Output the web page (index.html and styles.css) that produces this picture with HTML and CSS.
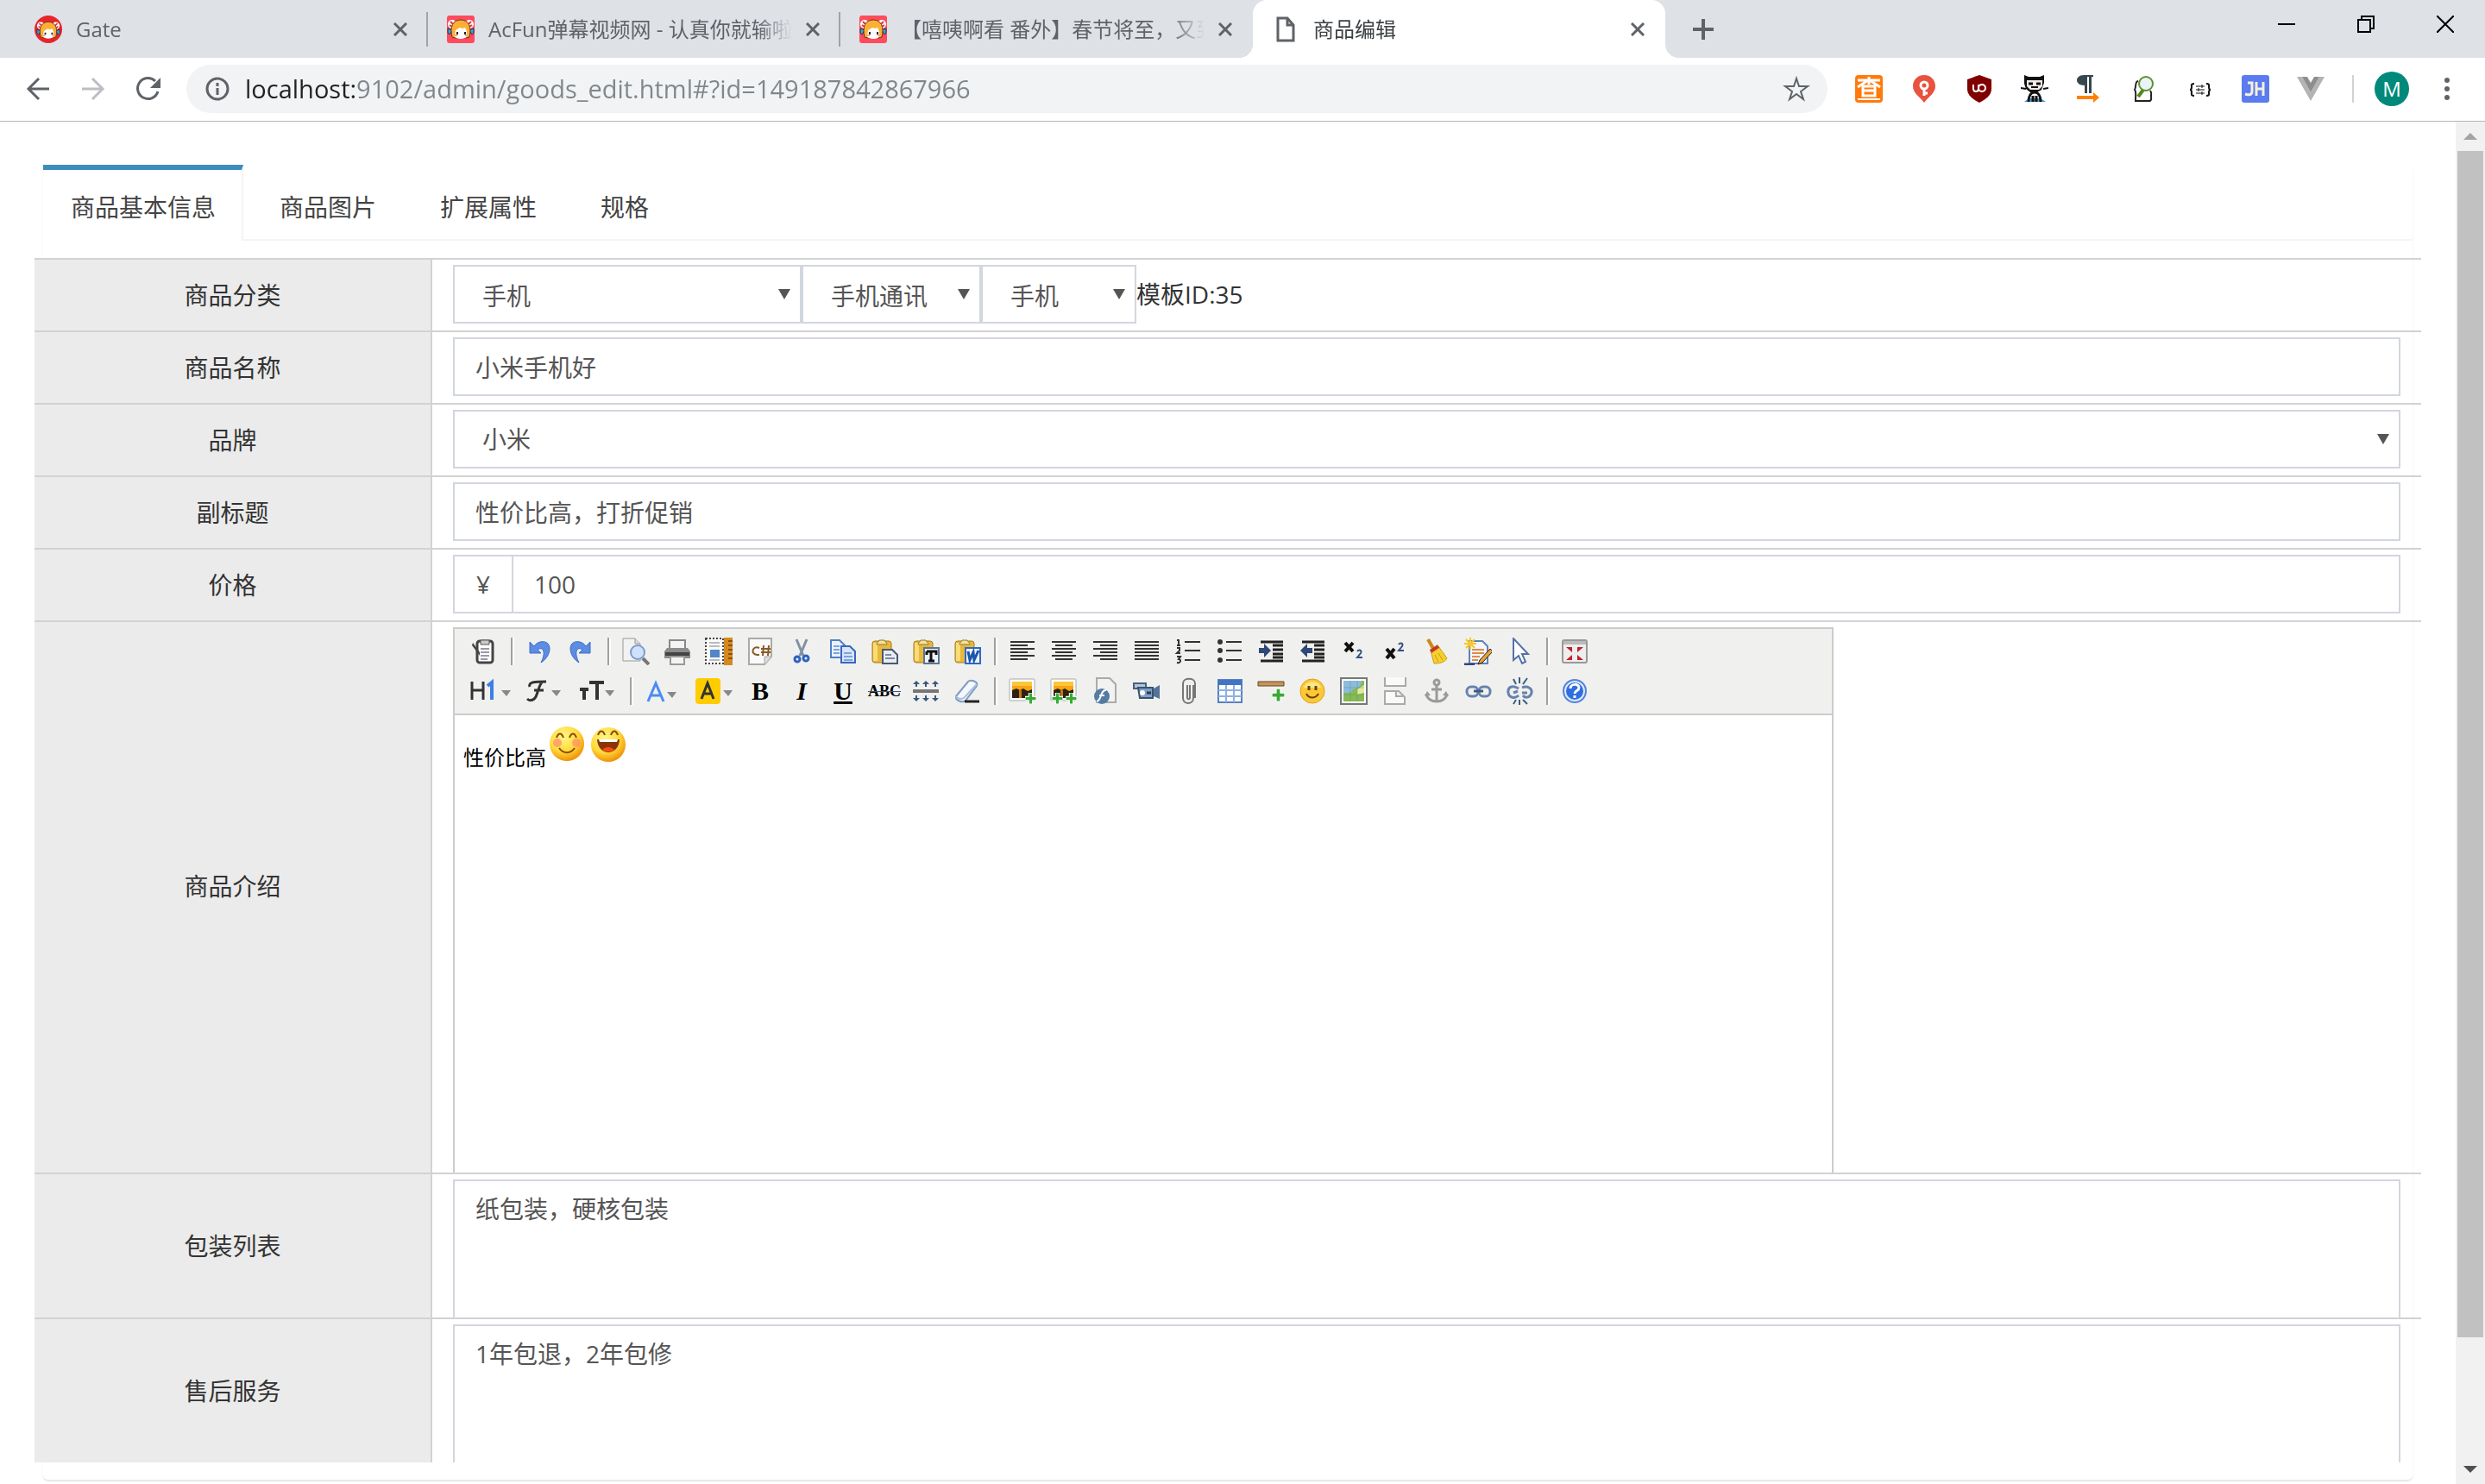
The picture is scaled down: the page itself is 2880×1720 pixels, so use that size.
FILE: index.html
```html
<!DOCTYPE html>
<html lang="zh-CN">
<head>
<meta charset="utf-8">
<title>商品编辑</title>
<link rel="stylesheet" href="styles.css">
</head>
<body>
<svg class="defs" aria-hidden="true">
  <symbol id="face" viewBox="0 0 32 32">
    <circle cx="6" cy="10" r="5" fill="#fff"/><circle cx="26" cy="10" r="5" fill="#fff"/>
    <path d="M4 7l3 3M3 11l3 2M28 7l-3 3M29 11l-3 2" stroke="#e8303c" stroke-width="2"/>
    <path d="M1 15l5 2-3 5-2-2zM31 15l-5 2 3 5 2-2z" fill="#35a7d8" stroke="#234" stroke-width="1"/>
    <path d="M6 25C3 13 7 5 16 5s13 8 10 20l-4 1H10z" fill="#fbb034" stroke="#6b3520" stroke-width="1"/>
    <path d="M10 17l5-3 3 1 3-1 2 4v6c-1 4-13 4-14 0z" fill="#fff"/>
    <path d="M12 19v3M21 19v3" stroke="#222" stroke-width="2"/>
    <path d="M9 23h3M21 23h3" stroke="#f8a0a0" stroke-width="2"/>
  </symbol>
  <symbol id="close" viewBox="0 0 16 16"><path d="M1 1l14 14M15 1L1 15" stroke="#5f6368" stroke-width="3" fill="none"/></symbol>
  <symbol id="clip" viewBox="0 0 32 32">
    <rect x="2" y="4" width="22" height="25" rx="3" fill="#e8b83a" stroke="#a87a18"/>
    <rect x="3" y="6" width="5" height="21" fill="#f8dc78"/>
    <path d="M7 8c0-3 3-3 3-5h6c0 2 3 2 3 5z" fill="#f3e29a" stroke="#96762a"/>
  </symbol>
  <symbol id="photo" viewBox="0 0 32 32">
    <rect x="1" y="2" width="29" height="25" rx="1" fill="#fff" stroke="#aaa"/>
    <rect x="4" y="5" width="23" height="19" fill="#f6a414"/><path d="M4 5h23v5H4z" fill="#fcc53a"/>
    <path d="M4 15l5-2 4 2 4-2 5 3 5-2v10H4z" fill="#2c2112"/><path d="M12 15h3v9h-3z" fill="#c57814"/>
  </symbol>
  <symbol id="plus" viewBox="0 0 12 12"><path d="M4 0h4v4h4v4H8v4H4V8H0V4h4z" fill="#39a935" stroke="#fff" stroke-width="1"/></symbol>
</svg>

<header class="browser">
  <div class="tabstrip">
    <div class="tab">
      <svg class="ico" viewBox="0 0 32 32"><circle cx="16" cy="16" r="16" fill="#e8242c"/><use href="#face" x="2" y="3" width="28" height="28"/></svg>
      <span class="tab-title">Gate</span>
      <button class="bare" aria-label="关闭"><svg class="x"><use href="#close"/></svg></button>
    </div>
    <div class="tab divided">
      <svg class="ico" viewBox="0 0 32 32"><rect width="32" height="32" rx="3" fill="#ff4b5c"/><use href="#face" width="32" height="32"/></svg>
      <span class="tab-title">AcFun弹幕视频网 - 认真你就输啦</span>
      <button class="bare" aria-label="关闭"><svg class="x"><use href="#close"/></svg></button>
    </div>
    <div class="tab divided">
      <svg class="ico" viewBox="0 0 32 32"><rect width="32" height="32" rx="3" fill="#ff4b5c"/><use href="#face" width="32" height="32"/></svg>
      <span class="tab-title">【嘻咦啊看 番外】春节将至，又到了</span>
      <button class="bare" aria-label="关闭"><svg class="x"><use href="#close"/></svg></button>
    </div>
    <div class="tab current">
      <svg class="ico" viewBox="0 0 32 32"><path d="M7 3h11l7 8v18H7zM18 3v8h7" fill="none" stroke="#5f6368" stroke-width="3"/></svg>
      <span class="tab-title">商品编辑</span>
      <button class="bare" aria-label="关闭"><svg class="x"><use href="#close"/></svg></button>
    </div>
    <button class="bare newtab" aria-label="新标签页"><svg width="24" height="24" viewBox="0 0 24 24"><path d="M12 0v24M0 12h24" stroke="#5f6368" stroke-width="4"/></svg></button>
    <div class="window-buttons">
      <button class="bare" aria-label="最小化"><svg width="20" height="20"><path d="M0 10h20" stroke="#000" stroke-width="2"/></svg></button>
      <button class="bare" aria-label="还原"><svg width="20" height="20"><path d="M1 5h14v14H1zM5 5V1h14v14h-4" fill="none" stroke="#000" stroke-width="2"/></svg></button>
      <button class="bare" aria-label="关闭窗口"><svg width="20" height="20"><path d="M0 0l20 20M20 0L0 20" stroke="#000" stroke-width="2"/></svg></button>
    </div>
  </div>
  <div class="toolbar">
    <button class="bare nav" aria-label="后退"><svg class="ico" viewBox="0 0 32 32"><path d="M29 16H6M17 4L5 16l12 12" fill="none" stroke="#5f6368" stroke-width="3"/></svg></button>
    <button class="bare nav" aria-label="前进"><svg class="ico" viewBox="0 0 32 32"><path d="M3 16h23M15 4l12 12-12 12" fill="none" stroke="#bcbec1" stroke-width="3"/></svg></button>
    <button class="bare nav" aria-label="刷新"><svg class="ico" viewBox="0 0 32 32"><path d="M27 19A12 12 0 1 1 24 7" fill="none" stroke="#5f6368" stroke-width="3"/><path d="M30 3v12H18z" fill="#5f6368"/></svg></button>
    <div class="omnibox">
      <svg class="ico" viewBox="0 0 32 32"><circle cx="16" cy="16" r="12" fill="none" stroke="#5f6368" stroke-width="3"/><path d="M16 9v4M16 15v8" stroke="#5f6368" stroke-width="3"/></svg>
      <input class="url" type="text" aria-label="地址" value="localhost:9102/admin/goods_edit.html#?id=149187842867966">
      <button class="bare" aria-label="收藏"><svg class="ico" viewBox="0 0 32 32"><path d="M16 4l3 9h10l-8 6 3 9-8-6-8 6 3-9-8-6h10z" fill="none" stroke="#5f6368" stroke-width="2"/></svg></button>
    </div>
    <div class="extensions">
      <button class="bare" aria-label="查"><svg class="ico" viewBox="0 0 32 32"><rect width="32" height="32" rx="4" fill="#ff7a0a"/><path d="M3 6h26M16 2v9M15 6L3 14M17 6l12 8M9 13h14v11H9zM9 18h14" fill="none" stroke="#fff" stroke-width="3"/><path d="M3 28h26" stroke="#fff" stroke-width="2"/></svg></button>
      <button class="bare" aria-label="密钥"><svg class="ico" viewBox="0 0 32 32"><path d="M16 0C8 0 3 6 3 13c0 8 8 12 13 19 5-7 13-11 13-19C29 6 24 0 16 0z" fill="#e9523f"/><circle cx="16" cy="12" r="4" fill="none" stroke="#fff" stroke-width="3"/><path d="M16 16v8M16 21h4" stroke="#fff" stroke-width="3"/></svg></button>
      <button class="bare" aria-label="uBlock"><svg class="ico" viewBox="0 0 32 32"><path d="M16 0l14 5v11c0 8-7 12-14 16C9 28 2 24 2 16V5z" fill="#800000"/><path d="M9 11v5c0 4 6 4 6 0v-5M15 11v8" fill="none" stroke="#fff" stroke-width="2"/><circle cx="19" cy="15" r="4" fill="none" stroke="#fff" stroke-width="2"/></svg></button>
      <button class="bare" aria-label="章鱼猫"><svg class="ico" viewBox="0 0 32 32"><path d="M4 0l5 2h13l5-2v9l-3 8-5 3H11l-5-4-2-6z" fill="#111"/><path d="M7 6h18v7l-4 4H11l-4-4z" fill="#f2ece8"/><path d="M9 10h5M18 10h5" stroke="#111" stroke-width="3"/><path d="M0 15l6 1M32 15l-6 1M12 14h8" stroke="#111" stroke-width="2"/><path d="M4 31l5-4h14l6 4z" fill="#3d9fd0"/><path d="M9 31c0-7 3-11 7-11s7 4 7 11M14 31v-7M18 31v-7" fill="none" stroke="#111" stroke-width="3"/></svg></button>
      <button class="bare" aria-label="段落"><svg class="ico" viewBox="0 0 32 32"><path d="M20 0v2h-2v19h-3V2h-2v19h-3V12C4 12 1 9 1 6s3-6 8-6z" fill="#37474f"/><path d="M1 24h19v-4l7 6-7 6v-4H1z" fill="#ff8000"/></svg></button>
      <button class="bare" aria-label="JSON 查看"><svg class="ico" viewBox="0 0 32 32"><path d="M8 7C4 7 6 14 4 17c2 2 1 6 1 13h16c3 0 2-5 2-6 0-3 1-3-1-6" fill="none" stroke="#222" stroke-width="2"/><path d="M14 17L8 25" stroke="#4e8a1d" stroke-width="4"/><circle cx="17" cy="10" r="8" fill="#eaf3fa" stroke="#5f8f2e" stroke-width="2"/></svg></button>
      <button class="bare" aria-label="参数"><svg class="ico" viewBox="0 0 32 32"><path d="M9 10c-4 0-3 2-3 4s-1 3-2 3c1 0 2 1 2 3s-1 4 3 4M23 10c4 0 3 2 3 4s1 3 2 3c-1 0-2 1-2 3s1 4-3 4" fill="none" stroke="#111" stroke-width="2"/><path d="M11 13h10M11 17h10M11 21h10M18 11v4M14 15v4M18 19v4" stroke="#111" stroke-width="1"/></svg></button>
      <button class="bare" aria-label="JH"><svg class="ico" viewBox="0 0 32 32"><rect width="32" height="32" rx="3" fill="#5b7bf0"/><path d="M7 9h5v10c0 5-5 4-8 3M17 8v16M25 8v16M17 16h8" fill="none" stroke="#f3f0dc" stroke-width="3"/></svg></button>
      <button class="bare" aria-label="Vue"><svg class="ico" viewBox="0 0 32 32"><path d="M0 2h6l10 18L26 2h6L16 30z" fill="#b4b4b4"/><path d="M6 2h6l4 7 4-7h6L16 20z" fill="#8e8e8e"/></svg></button>
    </div>
    <span class="bar"></span>
    <button class="bare avatar">M</button>
    <button class="bare" aria-label="菜单"><svg class="ico" viewBox="0 0 32 32" fill="#5f6368"><circle cx="16" cy="6" r="3"/><circle cx="16" cy="16" r="3"/><circle cx="16" cy="26" r="3"/></svg></button>
  </div>
</header>

<div class="viewport">
  <main class="page">
    <section class="card">
      <nav class="pills">
        <a class="pill active" href="#home">商品基本信息</a>
        <a class="pill" href="#pic">商品图片</a>
        <a class="pill" href="#attr">扩展属性</a>
        <a class="pill" href="#spec">规格</a>
      </nav>
      <form class="rows">
        <div class="row">
          <label class="name" for="cat1">商品分类</label>
          <div class="data categories">
            <span class="select cat-a"><select id="cat1" class="field"><option>手机</option></select></span>
            <span class="select cat-b"><select class="field" aria-label="二级分类"><option>手机通讯</option></select></span>
            <span class="select cat-c"><select class="field" aria-label="三级分类"><option>手机</option></select></span>
            <span>模板ID:35</span>
          </div>
        </div>
        <div class="row">
          <label class="name" for="title">商品名称</label>
          <div class="data"><input id="title" class="field" type="text" value="小米手机好"></div>
        </div>
        <div class="row">
          <label class="name" for="brand">品牌</label>
          <div class="data"><span class="select"><select id="brand" class="field"><option>小米</option></select></span></div>
        </div>
        <div class="row">
          <label class="name" for="caption">副标题</label>
          <div class="data"><input id="caption" class="field" type="text" value="性价比高，打折促销"></div>
        </div>
        <div class="row">
          <label class="name" for="price">价格</label>
          <div class="data price"><span class="addon">¥</span><input id="price" class="field" type="text" value="100"></div>
        </div>
        <div class="row tall">
          <span class="name" id="intro">商品介绍</span>
          <div class="data">
            <div class="editor">
              <div class="tools">
                <div class="tool-row">
                  <button type="button" class="tool" aria-label="源代码"><svg class="ico" viewBox="0 0 32 32"><rect x="8" y="4" width="18" height="25" rx="3" fill="#fff" stroke="#444" stroke-width="3"/><path d="M12 3h10v5H12z" fill="#ccc" stroke="#555" stroke-width="1"/><path d="M12 13h10M12 17h10M12 21h10M12 25h8" stroke="#99a" stroke-width="2"/><path d="M3 6l8 11v4L2 9z" fill="#444"/></svg></button>
                  <span class="sep"></span>
                  <button type="button" class="tool" aria-label="后退"><svg class="ico" viewBox="0 0 32 32"><path d="M5 5v13h13l-4-4c5-4 11 1 4 15 13-8 14-27-1-24-3 1-5 2-7 5z" fill="#5b8de4" stroke="#3d6dc8"/></svg></button>
                  <button type="button" class="tool" aria-label="前进"><svg class="ico" viewBox="0 0 32 32"><path d="M27 5v13H14l4-4c-5-4-11 1-4 15C1 21 0 2 15 5c3 1 5 2 7 5z" fill="#5b8de4" stroke="#3d6dc8"/></svg></button>
                  <span class="sep"></span>
                  <button type="button" class="tool" aria-label="预览"><svg class="ico" viewBox="0 0 32 32"><path d="M1 1h14l6 6v20H1z" fill="#f2f2f2" stroke="#999"/><path d="M15 1v6h6" fill="#ddd" stroke="#999"/><path d="M24 24l7 7" stroke="#777" stroke-width="4"/><circle cx="18" cy="17" r="8" fill="#cfe2fb" stroke="#7d9ccb" stroke-width="2"/></svg></button>
                  <button type="button" class="tool" aria-label="打印"><svg class="ico" viewBox="0 0 32 32"><path d="M7 3h18v11H7z" fill="#f4f4f4" stroke="#888" stroke-width="2"/><path d="M4 12h24l3 4v8H1v-8z" fill="#8c8c8c"/><path d="M2 17h28v4H2z" fill="#444"/><path d="M8 22h16v9H8z" fill="#f4f4f4" stroke="#999" stroke-width="2"/></svg></button>
                  <button type="button" class="tool" aria-label="插入模板"><svg class="ico" viewBox="0 0 32 32"><rect x="1" y="1" width="20" height="29" fill="#fafafa" stroke="#444" stroke-width="2" stroke-dasharray="2 2"/><path d="M5 6h12M5 10h12M5 26h12" stroke="#bbb" stroke-width="2"/><path d="M6 14h11v9H6z" fill="#5186c8"/><path d="M22 0h10v32H22z" fill="#d48a1e"/><path d="M27 4h5M27 9h5M27 14h5M27 19h5M27 24h5" stroke="#8a5208" stroke-width="2"/></svg></button>
                  <button type="button" class="tool" aria-label="插入代码"><svg class="ico" viewBox="0 0 32 32"><path d="M3 1h26v21l-8 9H3z" fill="#fafafa" stroke="#aaa" stroke-width="2"/><path d="M21 31v-9h8" fill="#ddd" stroke="#aaa"/><path d="M15 12c-8-4-11 8-2 8h2M20 9l-1 12M26 9l-1 12M17 13h11M17 17h11" fill="none" stroke="#8a5a22" stroke-width="2"/></svg></button>
                  <button type="button" class="tool" aria-label="剪切"><svg class="ico" viewBox="0 0 32 32"><path d="M10 2l8 19M22 2l-8 19" stroke="#8191a5" stroke-width="3"/><circle cx="11" cy="25" r="3" fill="none" stroke="#2f62bf" stroke-width="3"/><circle cx="21" cy="24" r="3" fill="none" stroke="#2f62bf" stroke-width="3"/></svg></button>
                  <button type="button" class="tool" aria-label="复制"><svg class="ico" viewBox="0 0 32 32"><path d="M2 3h10l6 6v14H2z" fill="#eaf1fc" stroke="#4f7fc8" stroke-width="2"/><path d="M14 10h10l6 6v13H14z" fill="#d7e5fa" stroke="#3768bc" stroke-width="2"/><path d="M5 10h7M5 14h7M5 18h7M17 18h9M17 22h10M17 26h10" stroke="#7ea3de" stroke-width="2"/></svg></button>
                  <button type="button" class="tool" aria-label="粘贴"><svg class="ico" viewBox="0 0 32 32"><use href="#clip"/><path d="M14 14h11l6 6v10H14z" fill="#e8edf5" stroke="#4a5873" stroke-width="2"/><path d="M17 20h7M17 24h11" stroke="#7b8aa5" stroke-width="2"/></svg></button>
                  <button type="button" class="tool" aria-label="粘贴为无格式文本"><svg class="ico" viewBox="0 0 32 32"><use href="#clip"/><path d="M14 12h17v18H14z" fill="#eef3fa" stroke="#5a7596" stroke-width="2"/><path d="M17 16h11v4M17 16v4M22 16v11M19 27h7" fill="none" stroke="#111" stroke-width="3"/></svg></button>
                  <button type="button" class="tool" aria-label="从 Word 粘贴"><svg class="ico" viewBox="0 0 32 32"><use href="#clip"/><path d="M14 12h17v18H14z" fill="#eef3fa" stroke="#2e6ac4" stroke-width="2"/><path d="M17 16l2 10 4-9 1 9 5-11" fill="none" stroke="#1c55ae" stroke-width="3"/></svg></button>
                  <span class="sep"></span>
                  <button type="button" class="tool" aria-label="左对齐"><svg class="ico" viewBox="0 0 32 32"><path d="M2 5h28M2 9h20M2 13h28M2 17h20M2 21h28M2 25h20" stroke="#333" stroke-width="2"/></svg></button>
                  <button type="button" class="tool" aria-label="居中"><svg class="ico" viewBox="0 0 32 32"><path d="M2 5h28M6 9h20M2 13h28M6 17h20M2 21h28M6 25h20" stroke="#333" stroke-width="2"/></svg></button>
                  <button type="button" class="tool" aria-label="右对齐"><svg class="ico" viewBox="0 0 32 32"><path d="M2 5h28M10 9h20M2 13h28M10 17h20M2 21h28M10 25h20" stroke="#333" stroke-width="2"/></svg></button>
                  <button type="button" class="tool" aria-label="两端对齐"><svg class="ico" viewBox="0 0 32 32"><path d="M2 5h28M2 9h28M2 13h28M2 17h28M2 21h28M2 25h28" stroke="#333" stroke-width="2"/></svg></button>
                  <button type="button" class="tool" aria-label="编号"><svg class="ico" viewBox="0 0 32 32"><path d="M12 5h18M12 15h18M12 26h18" stroke="#333" stroke-width="2"/><path d="M3 3h2v6M3 9h4M3 12h3v3l-3 3h4M3 22h4l-2 3c3 0 3 5-2 4" fill="none" stroke="#333" stroke-width="2"/></svg></button>
                  <button type="button" class="tool" aria-label="项目符号"><svg class="ico" viewBox="0 0 32 32"><path d="M12 5h18M12 15h18M12 26h18" stroke="#333" stroke-width="2"/><g fill="#333"><circle cx="5" cy="5" r="3"/><circle cx="5" cy="15" r="3"/><circle cx="5" cy="26" r="3"/></g></svg></button>
                  <button type="button" class="tool" aria-label="增加缩进"><svg class="ico" viewBox="0 0 32 32"><path d="M4 5h26M18 9h12M18 14h12M18 19h12M4 27h26M18 23h12" stroke="#222" stroke-width="3"/><path d="M2 12h6V7l8 8-8 8v-5H2z" fill="#2f4878"/></svg></button>
                  <button type="button" class="tool" aria-label="减少缩进"><svg class="ico" viewBox="0 0 32 32"><path d="M4 5h26M18 9h12M18 14h12M18 19h12M4 27h26M18 23h12" stroke="#222" stroke-width="3"/><path d="M16 12h-6V7l-8 8 8 8v-5h6z" fill="#2f4878"/></svg></button>
                  <button type="button" class="tool" aria-label="下标"><svg class="ico" viewBox="0 0 32 32"><path d="M6 6l9 10M15 6L6 16" stroke="#111" stroke-width="4"/><path d="M20 16c2-3 6-1 4 2l-4 5h6" fill="none" stroke="#375085" stroke-width="2"/></svg></button>
                  <button type="button" class="tool" aria-label="上标"><svg class="ico" viewBox="0 0 32 32"><path d="M6 13l9 11M15 13L6 24" stroke="#111" stroke-width="4"/><path d="M20 8c2-3 6-1 4 2l-4 5h6" fill="none" stroke="#375085" stroke-width="2"/></svg></button>
                  <button type="button" class="tool" aria-label="清理代码"><svg class="ico" viewBox="0 0 32 32"><path d="M6 2l8 14" stroke="#c98a1c" stroke-width="4"/><path d="M9 15l9-5 10 14c-3 5-9 6-15 6z" fill="#f6cf2f" stroke="#c99a12"/><path d="M9 16l9-6" stroke="#c23a22" stroke-width="4"/><path d="M14 20l4 8M18 18l5 8" stroke="#c99a12"/></svg></button>
                  <button type="button" class="tool" aria-label="一键排版"><svg class="ico" viewBox="0 0 32 32"><path d="M6 4h15l6 6v20H6z" fill="#f3f6fc" stroke="#6382b5" stroke-width="2"/><path d="M9 14h14M9 18h14M9 22h9M9 26h7" stroke="#e08a4a" stroke-width="2"/><path d="M7 0v14M0 7h14M2 2l10 10M12 2L2 12" stroke="#f9c728" stroke-width="2"/><path d="M30 13l3 3-12 13-5 2 2-5z" fill="#e9a13c" stroke="#222"/><path d="M0 31h12" stroke="#2f4878" stroke-width="3"/></svg></button>
                  <button type="button" class="tool" aria-label="全选"><svg class="ico" viewBox="0 0 32 32"><path d="M9 1v25l6-5 4 9 4-2-4-9h7z" fill="#fff" stroke="#5572a8" stroke-width="2"/></svg></button>
                  <span class="sep"></span>
                  <button type="button" class="tool" aria-label="全屏显示"><svg class="ico" viewBox="0 0 32 32"><rect x="2" y="3" width="28" height="26" rx="2" fill="#eee" stroke="#999" stroke-width="2"/><path d="M3 6h26" stroke="#bbb" stroke-width="4"/><path d="M6 11h7v6zM26 11h-7v6zM6 26h7v-6zM26 26h-7v-6z" fill="#c21f28"/></svg></button>
                </div>
                <div class="tool-row">
                  <button type="button" class="tool drop" aria-label="段落"><svg class="wide" viewBox="0 0 48 32"><path d="M2 5v21M15 5v21M2 15h13" fill="none" stroke="#333" stroke-width="3"/><path d="M20 10l5-4v20" fill="none" stroke="#3c7ee8" stroke-width="4"/><path d="M36 15h11l-5 7z" fill="#888"/></svg></button>
                  <button type="button" class="tool drop" aria-label="字体"><svg class="wide" viewBox="0 0 48 32"><path d="M7 11c-2-6 7-6 19-6M21 6c-3 3-4 9-6 14-2 7-8 8-11 5M12 15h11" fill="none" stroke="#333" stroke-width="3"/><path d="M32 15h11l-5 7z" fill="#888"/></svg></button>
                  <button type="button" class="tool drop" aria-label="文字大小"><svg class="wide" viewBox="0 0 48 32"><path d="M3 14h10M8 14v12M14 6h17M23 6v20" fill="none" stroke="#333" stroke-width="4"/><path d="M32 15h11l-5 7z" fill="#888"/></svg></button>
                  <span class="sep"></span>
                  <button type="button" class="tool color" aria-label="文字颜色"><svg class="wide" viewBox="0 0 48 32"><path d="M4 28l9-21 9 21M8 21h10" fill="none" stroke="#4b8bf5" stroke-width="3"/><path d="M26 17h11l-5 7z" fill="#888"/></svg></button>
                  <button type="button" class="tool color" aria-label="文字背景"><svg class="wide" viewBox="0 0 48 32"><rect y="1" width="29" height="30" rx="4" fill="#fc0"/><path d="M7 25l7-18 7 18M10 19h8" fill="none" stroke="#333" stroke-width="3"/><path d="M32 15h11l-5 7z" fill="#888"/></svg></button>
                  <button type="button" class="tool"><b>B</b></button>
                  <button type="button" class="tool"><i>I</i></button>
                  <button type="button" class="tool"><u>U</u></button>
                  <button type="button" class="tool"><s>ABC</s></button>
                  <button type="button" class="tool" aria-label="行距"><svg class="ico" viewBox="0 0 32 32"><path d="M1 16h30" stroke="#777" stroke-width="4"/><path d="M5 5v6M16 5v6M27 5v6M5 21v6M16 21v6M27 21v6" stroke="#3a587d" stroke-width="2"/><path d="M1 8l4-4 4 4zM12 8l4-4 4 4zM23 8l4-4 4 4zM1 24l4 4 4-4zM12 24l4 4 4-4zM23 24l4 4 4-4z" fill="#3a587d"/></svg></button>
                  <button type="button" class="tool" aria-label="删除格式"><svg class="ico" viewBox="0 0 32 32"><path d="M3 22L17 5c3-3 12 0 10 5L14 27c-4 3-12 0-11-5z" fill="#f4f8fd" stroke="#7f9cc4" stroke-width="2"/><path d="M3 22c2 4 8 4 11 0L27 8" fill="none" stroke="#a9bedb" stroke-width="2"/><path d="M13 28h17" stroke="#222" stroke-width="3"/></svg></button>
                  <span class="sep"></span>
                  <button type="button" class="tool" aria-label="图片"><svg class="ico" viewBox="0 0 32 32"><use href="#photo"/><use href="#plus" x="19" y="18" width="13" height="13"/></svg></button>
                  <button type="button" class="tool" aria-label="批量图片上传"><svg class="ico" viewBox="0 0 32 32"><use href="#photo"/><use href="#plus" x="2" y="18" width="13" height="13"/><use href="#plus" x="18" y="18" width="13" height="13"/></svg></button>
                  <button type="button" class="tool" aria-label="Flash"><svg class="ico" viewBox="0 0 32 32"><path d="M6 1h15l7 7v21H6z" fill="#f2f2f2" stroke="#aaa" stroke-width="2"/><circle cx="12" cy="22" r="9" fill="#557ba5"/><path d="M17 15c-7-1-5 12-11 13M9 21h6" fill="none" stroke="#fff" stroke-width="2"/></svg></button>
                  <button type="button" class="tool" aria-label="视音频"><svg class="ico" viewBox="0 0 32 32"><path d="M1 7h14v6H1z" fill="#b5c6dc" stroke="#46607f" stroke-width="2"/><path d="M6 12h17v12H8z" fill="#7f9fc4" stroke="#38536f" stroke-width="2"/><path d="M24 13l7-4v16l-7-3z" fill="#54739a"/><circle cx="11" cy="18" r="3" fill="#fff"/><path d="M16 18h5" stroke="#263b52" stroke-width="3"/></svg></button>
                  <button type="button" class="tool" aria-label="插入文件"><svg class="ico" viewBox="0 0 32 32"><path d="M22 9v15c0 8-12 8-12 0V7c0-7 14-7 14 0v17M15 9v14c0 3 3 3 3 0V9" fill="none" stroke="#777" stroke-width="2"/></svg></button>
                  <button type="button" class="tool" aria-label="表格"><svg class="ico" viewBox="0 0 32 32"><path d="M3 3h27v26H3z" fill="#fff" stroke="#5680c2" stroke-width="2"/><path d="M3 3h27v6H3z" fill="#4274c4"/><path d="M3 15h27M3 22h27M12 9v20M21 9v20" stroke="#8eb0e0" stroke-width="2"/></svg></button>
                  <button type="button" class="tool" aria-label="插入横线"><svg class="ico" viewBox="0 0 32 32"><path d="M1 5h30v5H1z" fill="#c4965a" stroke="#69451c"/><use href="#plus" x="17" y="13" width="15" height="15"/></svg></button>
                  <button type="button" class="tool" aria-label="插入表情"><svg class="ico" viewBox="0 0 32 32"><circle cx="16" cy="16" r="14" fill="#fcc934" stroke="#e79b18"/><path d="M6 12c2-8 17-10 20 0z" fill="#fee88a"/><path d="M12 10v5M20 10v5" stroke="#6b4208" stroke-width="3"/><path d="M9 19c3 6 11 6 14 0" fill="none" stroke="#6b4208" stroke-width="2"/></svg></button>
                  <button type="button" class="tool" aria-label="百度地图"><svg class="ico" viewBox="0 0 32 32"><path d="M1 1h30v30H1z" fill="#fff" stroke="#777" stroke-width="2"/><path d="M4 4h24v24H4z" fill="#86ba54"/><path d="M4 4h21c0 10-10 8-11 12-3 3-7 2-10 2z" fill="#8bbbe0"/><path d="M20 14l8-5v9l-8 2z" fill="#e3e99c"/><path d="M12 4v24M20 4v24M4 12h24M4 20h24" stroke="#5a8a63" opacity=".4"/></svg></button>
                  <button type="button" class="tool" aria-label="插入分页符"><svg class="ico" viewBox="0 0 32 32"><path d="M4 0v10h24V0M4 31V16h16l7 7v8zM17 16v6h8" fill="#fafafa" stroke="#aaa" stroke-width="2"/></svg></button>
                  <button type="button" class="tool" aria-label="锚点"><svg class="ico" viewBox="0 0 32 32"><circle cx="16" cy="6" r="3" fill="none" stroke="#9a9a9a" stroke-width="3"/><path d="M16 9v19M10 14h12M4 19c1 12 23 12 24 0" fill="none" stroke="#9a9a9a" stroke-width="3"/><path d="M2 22l3-6 4 5zM30 22l-3-6-4 5z" fill="#9a9a9a"/></svg></button>
                  <button type="button" class="tool" aria-label="超级链接"><svg class="ico" viewBox="0 0 32 32"><rect x="3" y="11" width="13" height="11" rx="5" fill="none" stroke="#6583ad" stroke-width="3"/><rect x="17" y="11" width="13" height="11" rx="5" fill="none" stroke="#6583ad" stroke-width="3"/><path d="M11 16h11" stroke="#3e5c87" stroke-width="3"/></svg></button>
                  <button type="button" class="tool" aria-label="取消超级链接"><svg class="ico" viewBox="0 0 32 32"><path d="M15 13C7 8 2 12 3 18s8 7 12 3M19 12c6-3 12 1 11 6s-7 7-10 3M9 18l5-2M19 18h6" fill="none" stroke="#6583ad" stroke-width="3"/><path d="M16 0v7M9 2l3 6M25 1l-5 7M16 32v-6M9 31l3-5M25 31l-5-5" stroke="#3e5c87" stroke-width="2"/></svg></button>
                  <span class="sep"></span>
                  <button type="button" class="tool" aria-label="关于"><svg class="ico" viewBox="0 0 32 32"><circle cx="16" cy="16" r="13" fill="#2f6fdd" stroke="#5685d8" stroke-width="2"/><circle cx="16" cy="16" r="11" fill="none" stroke="#dce9fb" stroke-width="2"/><path d="M11 13c0-6 10-6 10-1 0 4-5 3-5 7M16 21v3" fill="none" stroke="#fff" stroke-width="3"/></svg></button>
                </div>
              </div>
              <div class="canvas" contenteditable="true" role="textbox" aria-labelledby="intro">性价比高<svg class="emoji" viewBox="0 0 48 48"><defs><radialGradient id="sun" cx=".4" cy=".3" r=".7"><stop offset="0" stop-color="#fff68c"/><stop offset=".6" stop-color="#ffdb3a"/><stop offset="1" stop-color="#f0930c"/></radialGradient></defs><circle cx="24" cy="23" r="20" fill="url(#sun)"/><g fill="#ff8b6d" opacity=".7"><circle cx="13" cy="22" r="5"/><circle cx="35" cy="22" r="5"/></g><path d="M12 16c2-6 6-6 8 0M27 16c2-6 6-6 8 0M15 28c5 7 13 7 18 0" fill="none" stroke="#8a4b06" stroke-width="2"/></svg><svg class="emoji" viewBox="0 0 48 48"><circle cx="24" cy="24" r="20" fill="url(#sun)"/><path d="M12 13c2-6 6-6 8 0M27 13c2-6 6-6 8 0" fill="none" stroke="#8a4b06" stroke-width="2"/><path d="M11 18h26c-1 20-25 20-26 0z" fill="#8c3405"/><path d="M13 18h22l-1 3H14z" fill="#fff"/><path d="M17 30c4-4 10-4 14 0-4 3-10 3-14 0z" fill="#f2520d"/></svg></div>
            </div>
          </div>
        </div>
        <div class="row medium">
          <label class="name" for="pack">包装列表</label>
          <div class="data"><textarea id="pack" class="field">纸包装，硬核包装</textarea></div>
        </div>
        <div class="row medium">
          <label class="name" for="service">售后服务</label>
          <div class="data"><textarea id="service" class="field">1年包退，2年包修</textarea></div>
        </div>
      </form>
    </section>
  </main>
  <div class="scrollbar" aria-hidden="true">
    <div class="arrow up"></div>
    <div class="track"><div class="thumb"></div></div>
    <div class="arrow down"></div>
  </div>
</div>
</body>
</html>
```
FILE: styles.css
```css
* {
  box-sizing: border-box;
}

body {
  margin: 0;
  min-height: 100vh;
  display: flex;
  flex-direction: column;
  background: #fff;
  color: #333;
  font: 28px/40px "Open Sans", "Noto Sans CJK SC", sans-serif;
}

svg {
  display: block;
  flex: none;
}

.defs {
  position: absolute;
  width: 0;
  height: 0;
}

.ico {
  width: 32px;
  height: 32px;
}

.bare {
  display: flex;
  align-items: center;
  justify-content: center;
  flex: none;
  padding: 0;
  border: 0;
  background: none;
}

/* Browser window */

.tabstrip {
  display: flex;
  height: 67px;
  padding-left: 18px;
  background: #dee1e6;
}

.tab {
  position: relative;
  display: flex;
  align-items: center;
  gap: 16px;
  flex: 0 1 478px;
  min-width: 0;
  padding: 0 24px 0 22px;
  color: #5f6368;
  font-size: 24px;
}

.divided::before {
  content: "";
  position: absolute;
  left: -2px;
  top: 14px;
  width: 2px;
  height: 40px;
  background: #a0a3a8;
}

.tab-title {
  flex: 1;
  min-width: 0;
  overflow: hidden;
  white-space: nowrap;
  -webkit-mask-image: linear-gradient(to left, transparent, #000 40px);
  mask-image: linear-gradient(to left, transparent, #000 40px);
}

.x {
  width: 16px;
  height: 16px;
}

.current {
  background: #fff;
  border-radius: 16px 16px 0 0;
  color: #3c4043;
}

.current::before,
.current::after {
  content: "";
  position: absolute;
  bottom: 0;
  width: 16px;
  height: 16px;
}

.current::before {
  right: 100%;
  background: radial-gradient(circle at 0 0, transparent 16px, #fff 16px);
}

.current::after {
  left: 100%;
  background: radial-gradient(circle at 100% 0, transparent 16px, #fff 16px);
}

.newtab {
  margin-left: 32px;
}

.window-buttons {
  display: flex;
  margin-left: auto;
  height: 56px;
}

.window-buttons .bare {
  width: 92px;
}

.toolbar {
  display: flex;
  align-items: center;
  height: 74px;
  padding: 0 28px 1px 12px;
  border-bottom: 1px solid #b5b5b5;
}

.nav {
  width: 64px;
}

.omnibox {
  display: flex;
  align-items: center;
  flex: 1;
  gap: 16px;
  height: 56px;
  margin-left: 12px;
  padding: 0 20px;
  border-radius: 28px;
  background: #f1f3f4;
}

.url {
  flex: 1;
  min-width: 0;
  padding: 0;
  border: 0;
  background: linear-gradient(to right, #202124 128px, #80868b 128px);
  -webkit-background-clip: text;
  background-clip: text;
  color: transparent;
  font: inherit;
  font-size: 29px;
}

.extensions {
  display: flex;
  gap: 32px;
  margin-left: 32px;
}

.bar {
  width: 2px;
  height: 32px;
  margin: 0 24px 0 32px;
  background: #d0d2d5;
}

.avatar {
  width: 40px;
  height: 40px;
  margin-right: 28px;
  border-radius: 50%;
  background: #00897b;
  color: #fff;
  font: 24px/40px "Open Sans", sans-serif;
}

.viewport {
  display: flex;
  flex: 1;
}

.page {
  flex: 1;
  min-width: 0;
  padding: 50px 50px 4px;
}

.scrollbar {
  display: flex;
  flex-direction: column;
  width: 34px;
  background: #f1f1f1;
}

.arrow {
  display: flex;
  align-items: center;
  justify-content: center;
  height: 34px;
}

.arrow::before {
  content: "";
  border: 8px solid transparent;
}

.up::before {
  border-top: 0;
  border-bottom-color: #a3a3a3;
}

.down::before {
  border-bottom: 0;
  border-top-color: #505050;
}

.track {
  flex: 1;
  padding: 0 2px;
}

.thumb {
  height: 91%;
  background: #c1c1c1;
}

/* Goods form */

.card {
  padding-bottom: 20px;
  border-radius: 6px;
  box-shadow: 0 2px 2px rgba(0, 0, 0, 0.1);
}

.pills {
  display: flex;
  gap: 10px;
  border-bottom: 2px solid #f4f4f4;
}

.pill {
  padding: 23px 32px 17px;
  border-top: 6px solid transparent;
  color: #444;
  text-decoration: none;
}

.active {
  margin-bottom: -2px;
  padding-right: 30px;
  border-top-color: #3c8dbc;
  border-right: 2px solid #f4f4f4;
  background: #fff;
}

.rows {
  margin: 20px -10px 0;
}

.row {
  display: grid;
  grid-template-columns: 1fr 5fr;
  height: 84px;
  border-top: 2px solid #d2d2d2;
}

.medium {
  height: 168px;
}

.tall {
  height: 640px;
}

.name {
  display: flex;
  align-items: center;
  justify-content: center;
  border-right: 2px solid #d2d2d2;
  background: #ebebeb;
}

.tall .name {
  padding-bottom: 26px;
}

.data {
  min-width: 0;
  padding: 6px 24px 0;
  overflow: hidden;
}

.field {
  display: block;
  width: 100%;
  height: 68px;
  margin: 0;
  padding: 0 24px;
  border: 2px solid #d2d6de;
  border-radius: 0;
  background: #fff;
  color: #555;
  font: inherit;
}

textarea.field {
  height: 180px;
  padding-top: 12px;
  resize: none;
}

select.field {
  appearance: none;
  padding-left: 32px;
}

.select {
  position: relative;
  display: block;
}

.select::after {
  content: "";
  position: absolute;
  right: 13px;
  top: 28px;
  border: 7px solid transparent;
  border-top: 12px solid #555;
  border-bottom: 0;
}

.categories {
  display: flex;
  line-height: 68px;
}

.cat-a {
  width: 404px;
}

.cat-b {
  width: 208px;
}

.cat-c {
  width: 180px;
}

.price {
  display: flex;
}

.addon {
  width: 68px;
  height: 68px;
  border: 2px solid #d2d6de;
  border-right: 0;
  color: #555;
  line-height: 64px;
  text-align: center;
}

.price .field {
  flex: 1;
}

.editor {
  width: 1600px;
  max-width: 100%;
  height: 640px;
  border: 2px solid #ccc;
}

.tools {
  padding: 3px 10px;
  border-bottom: 2px solid #ccc;
  background: #f0f0ee;
}

.tool-row {
  display: flex;
  align-items: center;
  height: 46px;
}

.tool {
  display: flex;
  align-items: center;
  justify-content: center;
  width: 48px;
  height: 46px;
  padding: 0;
  border: 0;
  background: none;
  color: #000;
  font: bold 30px/32px "Liberation Serif", serif;
}

.tool s {
  font-size: 18px;
  text-decoration-color: #3a587d;
}

.drop,
.color {
  justify-content: flex-start;
  padding-left: 8px;
}

.drop {
  width: 62px;
}

.color {
  width: 59px;
}

.wide {
  width: 48px;
  height: 32px;
}

.sep {
  width: 16px;
  height: 32px;
  border-left: 7px solid #f0f0ee;
  background: linear-gradient(to right, #a0a0a0 2px, #fff 2px, #fff 4px, transparent 4px);
}

.canvas {
  padding: 10px;
  outline: 0;
  color: #000;
  font-size: 24px;
}

.emoji {
  display: inline-block;
  width: 48px;
  height: 48px;
  vertical-align: baseline;
}
```
